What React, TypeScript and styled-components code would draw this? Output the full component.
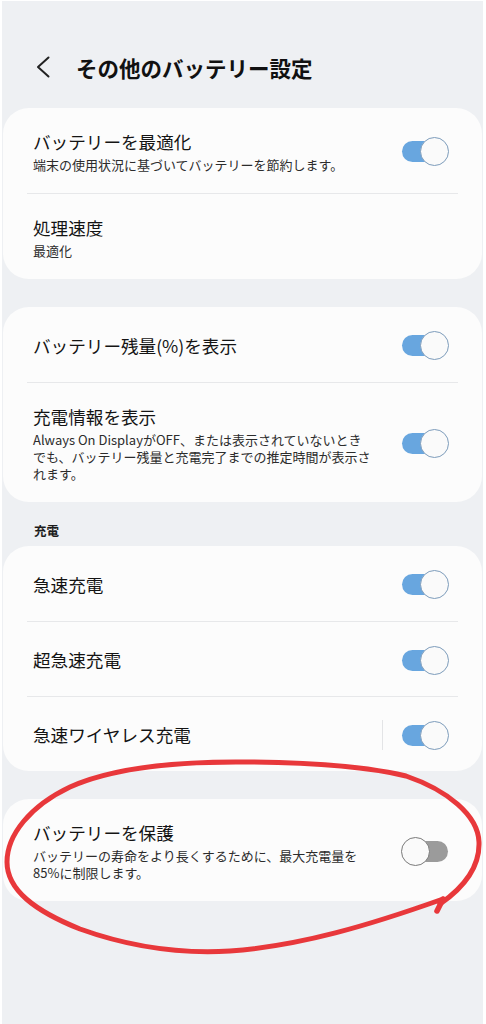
import styled, { createGlobalStyle } from "styled-components";

const GlobalStyle = createGlobalStyle`
  html, body {
    margin: 0;
    padding: 0;
    background: #ffffff;
  }
  body {
    font-family: "Noto Sans CJK JP", "Noto Sans", sans-serif;
    color: #111;
    -webkit-font-smoothing: antialiased;
  }
`;

const Screen = styled.div`
  position: relative;
  width: 486px;
  height: 1024px;
  overflow: hidden;
`;

const Page = styled.div`
  margin: 1px 3px 0 2px;
  height: 1023px;
  padding: 0 1px;
  box-sizing: border-box;
  background: #eef0f3;
  display: flex;
  flex-direction: column;
`;

const Header = styled.header`
  display: flex;
  align-items: center;
  height: 40px;
  margin: 46px 0 21px;
  padding-left: 31px;
`;

const BackButton = styled.button`
  display: flex;
  align-items: center;
  justify-content: center;
  width: 18px;
  height: 24px;
  padding: 0;
  border: 0;
  background: none;
  margin-right: 24px;
`;

const Title = styled.h1`
  margin: 0;
  font-size: 21.5px;
  font-weight: 700;
  color: #111;
`;

const Card = styled.section<{ $gapTop?: number }>`
  background: #fcfcfc;
  border-radius: 26px;
  padding: 0 24px;
  margin-top: ${(p) => p.$gapTop ?? 0}px;
`;

const Row = styled.div`
  display: flex;
  align-items: center;
  min-height: 75px;
  padding: 22px 9px 20px 6px;
  box-sizing: border-box;

  & + & {
    border-top: 1px solid #e7e8ea;
  }
`;

const TextCol = styled.div`
  flex: 1;
  min-width: 0;
`;

const RowTitle = styled.div`
  font-size: 17.6px;
  line-height: 24px;
  color: #141414;
`;

const RowSub = styled.div`
  margin-top: 2px;
  max-width: 340px;
  font-size: 13px;
  line-height: 17px;
  color: #2c2c2c;
`;

const SectionLabel = styled.div`
  margin: 20px 0 6px;
  padding-left: 31px;
  font-size: 12.5px;
  line-height: 18px;
  font-weight: 700;
  color: #1c1c1c;
`;

const VSep = styled.span`
  width: 1px;
  height: 30px;
  background: #e3e4e6;
  margin-right: 18px;
`;

const ToggleBox = styled.span`
  position: relative;
  flex: none;
  width: 48px;
  height: 29px;
`;

const Track = styled.span<{ $on: boolean }>`
  position: absolute;
  left: 1px;
  right: 1px;
  top: 4px;
  height: 21px;
  border-radius: 11px;
  background: ${(p) => (p.$on ? "#68a6df" : "#9b9b9b")};
`;

const Thumb = styled.span<{ $on: boolean }>`
  position: absolute;
  top: 0;
  ${(p) => (p.$on ? "right: 0;" : "left: 0;")}
  width: 29px;
  height: 29px;
  box-sizing: border-box;
  border-radius: 50%;
  background: #fafafa;
  border: 1.5px solid ${(p) => (p.$on ? "#7d9cbb" : "#7a7a7a")};
`;

const Annotation = styled.svg`
  position: absolute;
  left: 0;
  top: 0;
  pointer-events: none;
`;

const Toggle = ({ on }: { on: boolean }) => (
  <ToggleBox>
    <Track $on={on} />
    <Thumb $on={on} />
  </ToggleBox>
);

interface SettingProps {
  title: string;
  sub?: string;
  on?: boolean;
  split?: boolean;
}

const Setting = ({ title, sub, on, split }: SettingProps) => (
  <Row>
    <TextCol>
      <RowTitle>{title}</RowTitle>
      {sub && <RowSub>{sub}</RowSub>}
    </TextCol>
    {split && <VSep />}
    {on !== undefined && <Toggle on={on} />}
  </Row>
);

export default function App() {
  return (
    <Screen>
      <GlobalStyle />
      <Page>
        <Header>
          <BackButton aria-label="戻る">
            <svg width="16" height="22" viewBox="0 0 16 22" fill="none">
              <path
                d="M13.5 1.5 L3 11 L13.5 20.5"
                stroke="#222"
                strokeWidth="2"
                strokeLinecap="round"
                strokeLinejoin="round"
              />
            </svg>
          </BackButton>
          <Title>その他のバッテリー設定</Title>
        </Header>

        <Card>
          <Setting
            title="バッテリーを最適化"
            sub="端末の使用状況に基づいてバッテリーを節約します。"
            on
          />
          <Setting title="処理速度" sub="最適化" />
        </Card>

        <Card $gapTop={28}>
          <Setting title="バッテリー残量(%)を表示" on />
          <Setting
            title="充電情報を表示"
            sub="Always On DisplayがOFF、または表示されていないときでも、バッテリー残量と充電完了までの推定時間が表示されます。"
            on
          />
        </Card>

        <SectionLabel>充電</SectionLabel>
        <Card>
          <Setting title="急速充電" on />
          <Setting title="超急速充電" on />
          <Setting title="急速ワイヤレス充電" on split />
        </Card>

        <Card $gapTop={28}>
          <Setting
            title="バッテリーを保護"
            sub="バッテリーの寿命をより長くするために、最大充電量を85%に制限します。"
            on={false}
          />
        </Card>
      </Page>

      <Annotation width="486" height="1024" viewBox="0 0 486 1024">
        <path
          d="M440 904 C463 888, 480 868, 479 842 C478 815, 447 790, 406 776 C360 765, 300 762, 236 762 C170 762, 110 769, 70 787 C30 806, 7 835, 7 862 C7 890, 35 911, 80 929 C130 947, 180 954, 230 951 C300 946, 370 925, 443 899"
          fill="none"
          stroke="#e8383b"
          strokeWidth="5"
          strokeLinecap="round"
          strokeLinejoin="round"
        />
        <path
          d="M443 899 L437 911"
          fill="none"
          stroke="#e8383b"
          strokeWidth="5.5"
          strokeLinecap="round"
        />
      </Annotation>
    </Screen>
  );
}
